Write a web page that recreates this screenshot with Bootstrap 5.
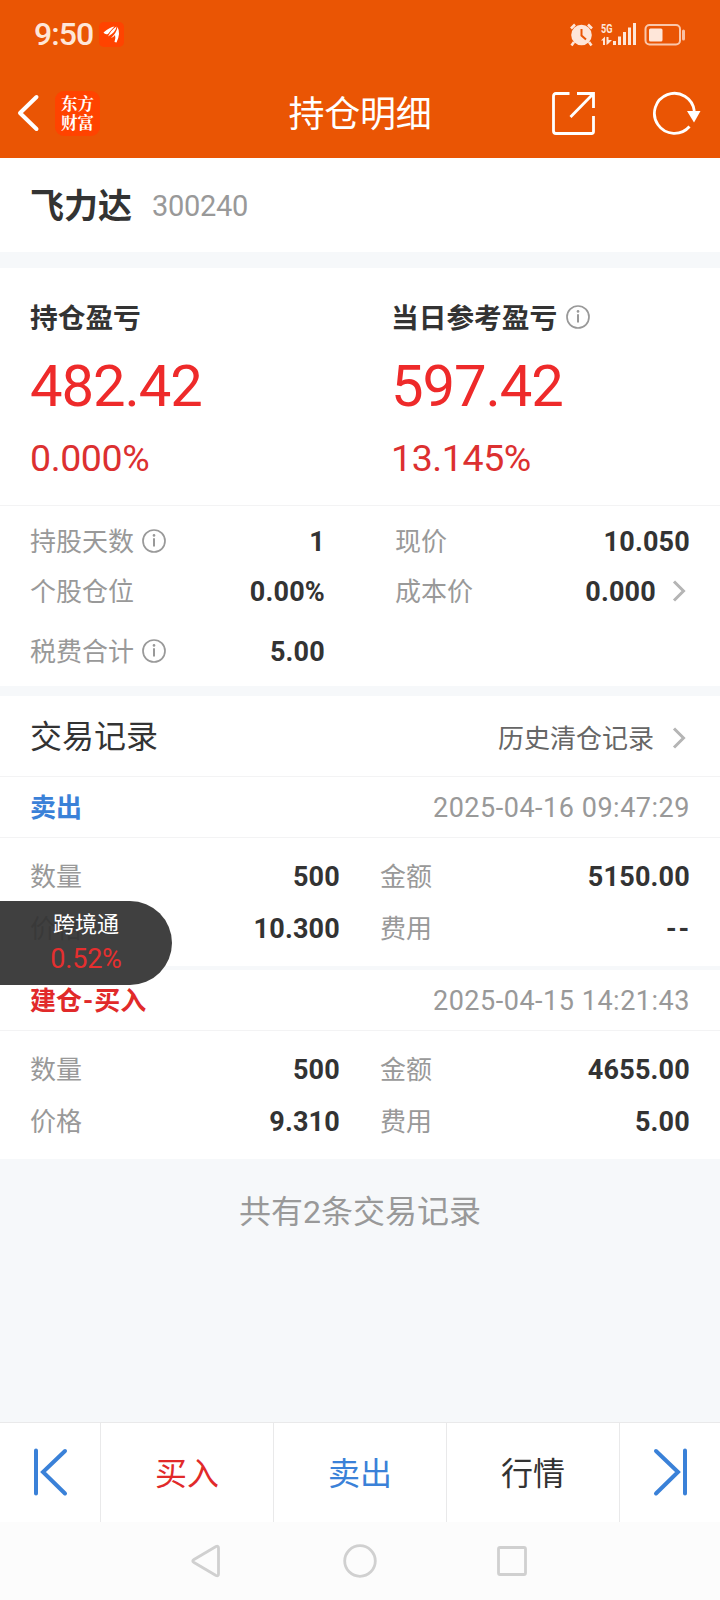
<!DOCTYPE html>
<html lang="zh-CN">
<head>
<meta charset="utf-8">
<meta name="viewport" content="width=device-width, initial-scale=1">
<title>持仓明细</title>
<link href="https://cdn.jsdelivr.net/npm/bootstrap@5.3.0/dist/css/bootstrap.min.css" rel="stylesheet">
<style>
  body { font-family: Roboto, "Noto Sans CJK SC", sans-serif; font-size: 26px; line-height: 1.2; color: #333; background: #f6f8fa; width: 720px; height: 1600px; overflow: hidden; }
  svg { display: block; flex: none; }
  .topbar { background: #ea5504; height: 158px; color: #fff; }
  .status { height: 68px; padding: 0 34px 0 34px; color: #fee6d9; }
  .clock { font-size: 32px; letter-spacing: -.9px; }
  .titlebar { display: grid; grid-template-columns: 180px 1fr 180px; height: 90px; }
  .titlebar h1 { font-size: 36px; font-weight: 400; line-height: 44px; letter-spacing: -.2px; padding-top: 4px; }
  .brand { width: 45px; height: 45px; border-radius: 9px; background: #ff4300; font: 700 16.5px/19px "Noto Serif CJK SC", "Noto Sans CJK SC", sans-serif; }
  .stock { height: 94px; padding: 2px 30px 0; }
  .stock b { font-size: 34px; line-height: 40px; }
  .stock span { font-size: 29px; margin-left: 20px; letter-spacing: -.3px; color: #999; }
  .band { background: #f6f8fa; }
  .profit { height: 238px; border-bottom: 1px solid #f3f3f4; }
  .profit > div { flex: 0 0 361px; padding: 30px 0 0 30px; }
  .profit h2 { font-size: 27.7px; font-weight: 700; line-height: 40px; height: 40px; }
  .profit h2 span { padding-top: 2px; }
  .amount { font-size: 58px; line-height: 70px; margin-top: 13px; letter-spacing: -1.1px; color: #ee2a2a; }
  .percent { font-size: 37.5px; line-height: 44px; margin-top: 15px; letter-spacing: -.4px; color: #dc3030; }
  .muted { color: #999; padding-top: 2px; }
  .facts { height: 180px; padding: 11px 30px 0; }
  .facts svg { margin-bottom: 2px; }
  .fact-line { display: grid; grid-template-columns: 295px 295px; column-gap: 70px; height: 50px; }
  .trade { height: 128px; padding: 14px 30px 0; }
  .trade .muted { padding-top: 0; }
  .trade-line { display: grid; grid-template-columns: 310px 310px; column-gap: 40px; height: 51px; }
  .trade-line + .trade-line { height: 53px; }
  .num { font-size: 27px; font-weight: 700; letter-spacing: .2px; }
  .head { padding: 3px 30px 0; height: 61px; border-bottom: 1px solid #f3f3f4; }
  .head b { padding-top: 1px; }
  .dash { padding: 0 1px; }
  .stamp { font-size: 27px; letter-spacing: .52px; color: #999; }
  .up { color: #e12a2a; }
  .down { color: #3a81d8; }
  .rec-title { height: 81px; padding: 2px 30px 0; border-bottom: 1px solid #f3f3f4; }
  .rec-title h2 { font-size: 32px; font-weight: 400; line-height: 40px; }
  .rec-title span { color: #666; padding-top: 6px; }
  .total { height: 263px; padding-top: 32px; font-size: 32px; line-height: 42px; color: #999; }
  .actions { height: 100px; border-top: 1px solid #e9e9ea; font-size: 32px; display: grid; grid-template-columns: 101px 173px 173px 173px 100px; }
  .actions > a { border-right: 1px solid #e9e9ea; text-decoration: none; }
  .actions > a.justify-content-center { padding-top: 4px; }
  .actions > a:last-child { border: 0; }
  .actions svg { margin-bottom: 2px; }
  .sysnav { height: 78px; background: #fcfcfc; }
  .ticker { left: 0; top: 901px; width: 172px; height: 84px; border-radius: 0 42px 42px 0; background: rgba(50,50,50,.93); }
  .ticker div { font-size: 22px; line-height: 34px; padding-top: 7px; color: #fff; }
  .ticker p { font-size: 27px; line-height: 34px; letter-spacing: -.2px; color: #e52f2f; }
</style>
</head>
<body class="position-relative">
<svg width="0" height="0" class="position-absolute">
  <symbol id="info" viewBox="0 0 24 24"><circle cx="12" cy="12" r="11" fill="none" stroke="#999" stroke-width="1.7"/><path d="M12 9.3v8.2" stroke="#999" stroke-width="2"/><circle cx="12" cy="6.4" r="1.3" fill="#999"/></symbol>
  <symbol id="more" viewBox="0 0 14 24"><path d="M2 2.5 11.5 12 2 21.5" fill="none" stroke="#b5b5b5" stroke-width="3"/></symbol>
</svg>

<header class="topbar">
  <div class="status d-flex align-items-center">
    <span class="clock fw-medium">9:50</span>
    <svg width="25" height="25" viewBox="0 0 25 25" style="margin-left:6px"><rect width="25" height="25" rx="5" fill="#ff4300"/><path d="M4.500 10.500Q11 5 15.500 4.500Q12 8 9 12Q6 13 4.500 10.500ZM9 14.500Q12 8 17.500 4.500Q17 10 9 14.500ZM12 16Q17.500 11 18.500 5Q22 11 17.500 20.500L15.500 20Q17 16 16 13Q15 15 12 16Z" fill="#fff"/></svg>
    <svg class="ms-auto" width="118" height="26" viewBox="0 0 118 26">
      <g fill="#fee6d9">
        <circle cx="13.500" cy="14" r="10.300"/>
        <path d="M3 7.500 7 3.500M20 3.500l4 4M6 21l-2.500 3.500M21 21l2.500 3.500" stroke="#fee6d9" stroke-width="2.600"/>
        <path d="M13.500 8v6.500l4.500 4" fill="none" stroke="#ea5504" stroke-width="2"/>
        <text x="33" y="12" font-family="Roboto" font-size="13" font-weight="700" textLength="11.500" lengthAdjust="spacingAndGlyphs">5G</text>
        <path d="M33 19.500l4-4V24h-2v-4.500zM38.500 16h2v3h3.500l-4 4-1.500 1z"/>
        <path d="M45 20h3v4h-3zM50 15.500h3V24h-3zM55 11h3V24h-3zM60 6.500h3V24h-3zM65 2h3v22h-3z"/>
        <rect x="81" y="7.500" width="13.500" height="13" rx="1.500"/>
        <rect x="114" y="8.500" width="3" height="11" rx="1.500" opacity=".75"/>
      </g>
      <rect x="77.500" y="4" width="34.500" height="19.500" rx="4" fill="none" stroke="#fac7ab" stroke-width="2"/>
    </svg>
  </div>
  <div class="titlebar align-items-center">
    <div class="d-flex align-items-center">
      <svg width="24" height="40" viewBox="0 0 24 40" style="margin-left:16px"><path d="M20.500 4 4 20l16.500 16" fill="none" stroke="#fff" stroke-width="4" stroke-linecap="round" stroke-linejoin="round"/></svg>
      <div class="brand d-flex flex-column justify-content-center text-center" style="margin-left:15px">东方<br>财富</div>
    </div>
    <h1 class="mb-0 text-center">持仓明细</h1>
    <div class="d-flex align-items-center">
      <svg width="44" height="44" viewBox="0 0 44 44" style="margin-left:11px"><path d="M18.500 2.500H5Q2.500 2.500 2.500 5v35q0 2.500 2.500 2.500h35.500q2 0 2-2V25M26 2.500h16.500V17M42 3 19.500 26" fill="none" stroke="#fff" stroke-width="2.800"/></svg>
      <svg width="50" height="46" viewBox="0 0 50 46" style="margin-left:57px"><path d="M37.500 36.500A20 20 0 1 1 42.300 21" fill="none" stroke="#fff" stroke-width="2.800"/><path d="M35 21h13.500l-6.500 11.500z" fill="#fff"/></svg>
    </div>
  </div>
</header>

<main class="bg-white">
  <section class="stock d-flex align-items-center"><b>飞力达</b><span>300240</span></section>
  <div class="band" style="height:16px"></div>
  <section class="profit d-flex">
    <div><h2 class="m-0 d-flex align-items-center"><span>持仓盈亏</span></h2><div class="amount">482.42</div><div class="percent">0.000%</div></div>
    <div><h2 class="m-0 d-flex align-items-center"><span>当日参考盈亏</span><svg width="24" height="24" style="margin:0 0 2px 9px"><use href="#info"/></svg></h2><div class="amount">597.42</div><div class="percent">13.145%</div></div>
  </section>
  <section class="facts">
    <div class="fact-line">
      <div class="d-flex align-items-center"><span class="muted">持股天数</span><svg width="24" height="24" class="ms-2"><use href="#info"/></svg><span class="num ms-auto">1</span></div>
      <div class="d-flex align-items-center"><span class="muted">现价</span><span class="num ms-auto">10.050</span></div>
    </div>
    <div class="fact-line">
      <div class="d-flex align-items-center"><span class="muted">个股仓位</span><span class="num ms-auto">0.00%</span></div>
      <div class="d-flex align-items-center"><span class="muted">成本价</span><span class="num ms-auto">0.000</span><svg width="14" height="24" style="margin:0 4px 2px 16px"><use href="#more"/></svg></div>
    </div>
    <div class="fact-line" style="height:70px">
      <div class="d-flex align-items-center"><span class="muted">税费合计</span><svg width="24" height="24" class="ms-2"><use href="#info"/></svg><span class="num ms-auto">5.00</span></div>
    </div>
  </section>
  <div class="band" style="height:10px"></div>
  <section class="rec-title d-flex align-items-center">
    <h2 class="m-0">交易记录</h2><span class="ms-auto">历史清仓记录</span><svg width="14" height="24" style="margin:2px 4px 0 18px"><use href="#more"/></svg>
  </section>
  <div class="head d-flex align-items-center"><b class="down">卖出</b><span class="stamp ms-auto">2025-04-16 09:47:29</span></div>
  <section class="trade">
    <div class="trade-line">
      <div class="d-flex align-items-center"><span class="muted">数量</span><span class="num ms-auto">500</span></div>
      <div class="d-flex align-items-center"><span class="muted">金额</span><span class="num ms-auto">5150.00</span></div>
    </div>
    <div class="trade-line">
      <div class="d-flex align-items-center"><span class="muted">价格</span><span class="num ms-auto">10.300</span></div>
      <div class="d-flex align-items-center"><span class="muted">费用</span><span class="num ms-auto" style="letter-spacing:1.8px;margin-right:-1px">--</span></div>
    </div>
  </section>
  <div class="band" style="height:4px"></div>
  <div class="head d-flex align-items-center"><b class="up">建仓<span class="dash">-</span>买入</b><span class="stamp ms-auto">2025-04-15 14:21:43</span></div>
  <section class="trade">
    <div class="trade-line">
      <div class="d-flex align-items-center"><span class="muted">数量</span><span class="num ms-auto">500</span></div>
      <div class="d-flex align-items-center"><span class="muted">金额</span><span class="num ms-auto">4655.00</span></div>
    </div>
    <div class="trade-line">
      <div class="d-flex align-items-center"><span class="muted">价格</span><span class="num ms-auto">9.310</span></div>
      <div class="d-flex align-items-center"><span class="muted">费用</span><span class="num ms-auto">5.00</span></div>
    </div>
  </section>
</main>

<div class="total text-center">共有2条交易记录</div>

<nav class="actions bg-white">
  <a class="d-flex align-items-center" href="#"><svg width="36" height="52" viewBox="0 0 36 52" style="margin-left:32px"><path d="M4 4.500v43M33 5 11 26l22 21.500" fill="none" stroke="#3a81d8" stroke-width="4" stroke-linecap="round"/></svg></a>
  <a class="d-flex align-items-center justify-content-center up" href="#">买入</a>
  <a class="d-flex align-items-center justify-content-center down" href="#">卖出</a>
  <a class="d-flex align-items-center justify-content-center text-reset" href="#">行情</a>
  <a class="d-flex align-items-center" href="#"><svg width="36" height="52" viewBox="0 0 36 52" style="margin-left:33px"><path d="M32 4.500v43M3 5l22 21L3 47.500" fill="none" stroke="#3a81d8" stroke-width="4" stroke-linecap="round"/></svg></a>
</nav>
<div class="sysnav d-flex align-items-center justify-content-center">
  <svg width="340" height="36" viewBox="0 0 340 36" fill="none" stroke="#d0d0d0" stroke-width="2.800" stroke-linejoin="round">
    <path d="M4 16.500 26 3.500q2.500-1 2.500 1.500v26q0 2.500-2.500 1.500L4 19.500q-2.500-1.500 0-3z"/>
    <circle cx="170" cy="18" r="15.300"/>
    <rect x="308.500" y="4.500" width="27" height="27" rx="1.500"/>
  </svg>
</div>

<aside class="ticker position-absolute text-center"><div>跨境通</div><p class="m-0">0.52%</p></aside>
<script src="https://cdn.jsdelivr.net/npm/bootstrap@5.3.0/dist/js/bootstrap.bundle.min.js"></script>
</body>
</html>
